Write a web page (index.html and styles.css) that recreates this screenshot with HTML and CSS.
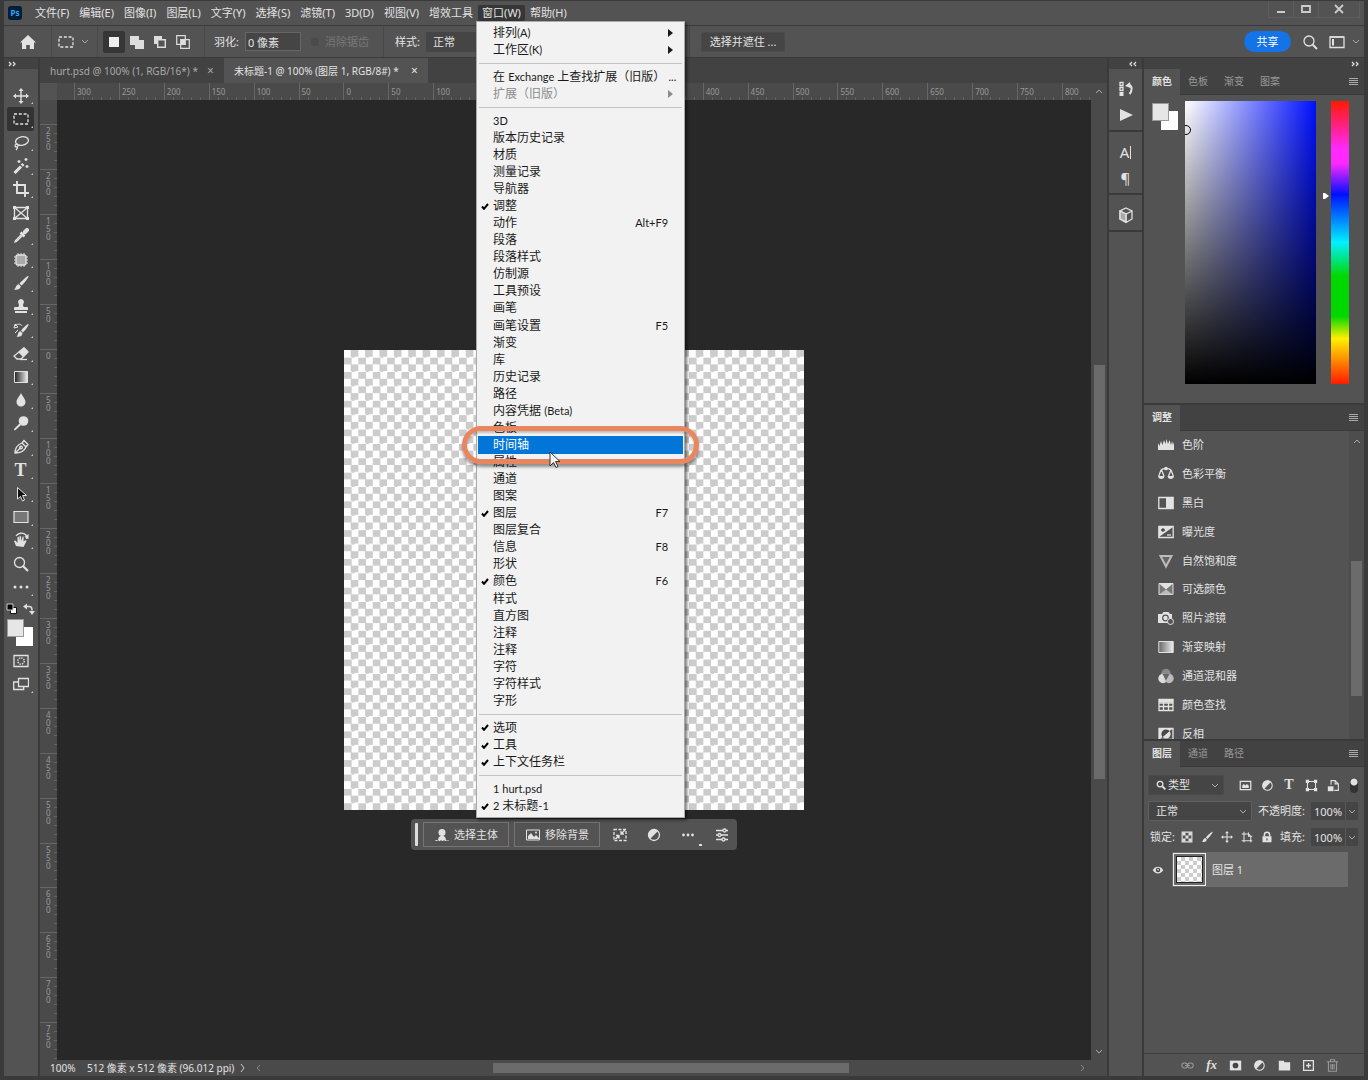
FILE: index.html
```html
<!DOCTYPE html>
<html lang="zh-CN">
<head>
<meta charset="utf-8">
<title>Photoshop</title>
<link rel="stylesheet" href="styles.css">
</head>
<body>
<div class="app">
  <header class="menubar">
    <span class="logo">Ps</span>
    <nav class="menus">
      <button class="menu-title">文件(F)</button>
      <button class="menu-title">编辑(E)</button>
      <button class="menu-title">图像(I)</button>
      <button class="menu-title">图层(L)</button>
      <button class="menu-title">文字(Y)</button>
      <button class="menu-title">选择(S)</button>
      <button class="menu-title">滤镜(T)</button>
      <button class="menu-title">3D(D)</button>
      <button class="menu-title">视图(V)</button>
      <button class="menu-title">增效工具</button>
      <div class="menu-host">
        <button class="menu-title open">窗口(W)</button>
        <ul class="dropdown">
          <li><button class="item"><span>排列<i>(A)</i></span><svg class="arrow" viewBox="0 0 5 8"><path d="M0 0l5 4-5 4z"/></svg></button></li>
          <li><button class="item"><span>工作区<i>(K)</i></span><svg class="arrow" viewBox="0 0 5 8"><path d="M0 0l5 4-5 4z"/></svg></button></li>
          <li class="rule"></li>
          <li><button class="item"><span>在 <i>Exchange</i> 上查找扩展（旧版） <i>...</i></span></button></li>
          <li><button class="item" disabled><span>扩展（旧版）</span><svg class="arrow" viewBox="0 0 5 8"><path d="M0 0l5 4-5 4z"/></svg></button></li>
          <li class="rule"></li>
          <li><button class="item"><span><i>3D</i></span></button></li>
          <li><button class="item"><span>版本历史记录</span></button></li>
          <li><button class="item"><span>材质</span></button></li>
          <li><button class="item"><span>测量记录</span></button></li>
          <li><button class="item"><span>导航器</span></button></li>
          <li><button class="item"><svg class="tick" viewBox="0 0 8 7"><path d="M1 3.500l2 2.300L7 1"/></svg><span>调整</span></button></li>
          <li><button class="item"><span>动作</span><kbd>Alt+F9</kbd></button></li>
          <li><button class="item"><span>段落</span></button></li>
          <li><button class="item"><span>段落样式</span></button></li>
          <li><button class="item"><span>仿制源</span></button></li>
          <li><button class="item"><span>工具预设</span></button></li>
          <li><button class="item"><span>画笔</span></button></li>
          <li><button class="item"><span>画笔设置</span><kbd>F5</kbd></button></li>
          <li><button class="item"><span>渐变</span></button></li>
          <li><button class="item"><span>库</span></button></li>
          <li><button class="item"><span>历史记录</span></button></li>
          <li><button class="item"><span>路径</span></button></li>
          <li><button class="item"><span>内容凭据 <i>(Beta)</i></span></button></li>
          <li><button class="item"><span>色板</span></button></li>
          <li class="current"><button class="item"><span>时间轴</span></button><span class="ring"></span>
            <svg class="pointer" viewBox="0 0 12 18"><path d="M1 1v14l3.500-3.500 2.500 5 2-1-2.500-5H11z"/></svg></li>
          <li><button class="item"><span>属性</span></button></li>
          <li><button class="item"><span>通道</span></button></li>
          <li><button class="item"><span>图案</span></button></li>
          <li><button class="item"><svg class="tick" viewBox="0 0 8 7"><path d="M1 3.500l2 2.300L7 1"/></svg><span>图层</span><kbd>F7</kbd></button></li>
          <li><button class="item"><span>图层复合</span></button></li>
          <li><button class="item"><span>信息</span><kbd>F8</kbd></button></li>
          <li><button class="item"><span>形状</span></button></li>
          <li><button class="item"><svg class="tick" viewBox="0 0 8 7"><path d="M1 3.500l2 2.300L7 1"/></svg><span>颜色</span><kbd>F6</kbd></button></li>
          <li><button class="item"><span>样式</span></button></li>
          <li><button class="item"><span>直方图</span></button></li>
          <li><button class="item"><span>注释</span></button></li>
          <li><button class="item"><span>注释</span></button></li>
          <li><button class="item"><span>字符</span></button></li>
          <li><button class="item"><span>字符样式</span></button></li>
          <li><button class="item"><span>字形</span></button></li>
          <li class="rule"></li>
          <li><button class="item"><svg class="tick" viewBox="0 0 8 7"><path d="M1 3.500l2 2.300L7 1"/></svg><span>选项</span></button></li>
          <li><button class="item"><svg class="tick" viewBox="0 0 8 7"><path d="M1 3.500l2 2.300L7 1"/></svg><span>工具</span></button></li>
          <li><button class="item"><svg class="tick" viewBox="0 0 8 7"><path d="M1 3.500l2 2.300L7 1"/></svg><span>上下文任务栏</span></button></li>
          <li class="rule"></li>
          <li><button class="item"><span><i>1 hurt.psd</i></span></button></li>
          <li><button class="item"><svg class="tick" viewBox="0 0 8 7"><path d="M1 3.500l2 2.300L7 1"/></svg><span><i>2 </i>未标题<i>-1</i></span></button></li>
        </ul>
      </div>
      <button class="menu-title">帮助(H)</button>
    </nav>
    <div class="window-buttons">
      <button aria-label="最小化"><svg viewBox="0 0 12 12"><path d="M2 8h8v2H2z" fill="currentColor"/></svg></button>
      <button aria-label="最大化"><svg viewBox="0 0 12 12"><path d="M2 3h8v6H2z" fill="none" stroke="currentColor" stroke-width="1.800"/></svg></button>
      <button aria-label="关闭" class="close"><svg viewBox="0 0 12 12"><path d="M2 2l8 8M10 2l-8 8" stroke="currentColor" stroke-width="1.800"/></svg></button>
    </div>
  </header>

  <section class="options">
    <div class="group home"><button aria-label="主页"><svg class="ic" viewBox="0 0 16 16"><path d="M8 1L0 8.500h2V15h4.200v-4h3.600v4H14V8.500h2z"/></svg></button></div>
    <div class="group preset">
      <svg class="ic line" viewBox="0 0 16 16"><path d="M1 3h14v10H1z" stroke-dasharray="3 1.800"/></svg>
      <svg class="chev" viewBox="0 0 8 5"><path d="M1 1l3 3 3-3"/></svg>
    </div>
    <div class="group modes">
      <button class="on" aria-label="新选区"><svg viewBox="0 0 14 14"><path d="M2 2h10v10H2z" fill="#eee"/></svg></button>
      <button aria-label="添加到选区"><svg viewBox="0 0 14 14"><path d="M0 1h9v4h5v9H5V10H0z" fill="#ddd"/></svg></button>
      <button aria-label="从选区减去"><svg viewBox="0 0 14 14"><path d="M1 1h8v3H4v5H1z" fill="#ddd"/><path d="M4.700 4.700h7.600v7.600H4.700z" fill="none" stroke="#ddd" stroke-width="1.400"/></svg></button>
      <button aria-label="与选区交叉"><svg viewBox="0 0 14 14"><path d="M.7.7h8.600v8.600H.7zM4.700 4.700h8.600v8.600H4.700z" fill="none" stroke="#ddd" stroke-width="1.200"/><path d="M5 5h4v4H5z" fill="#ddd"/></svg></button>
    </div>
    <div class="group feather">
      <label for="feather">羽化:</label><input id="feather" type="text" value="0 像素">
      <input id="aa" type="checkbox" disabled><label for="aa" class="off">消除锯齿</label>
    </div>
    <div class="group style">
      <label for="style">样式:</label>
      <span class="select"><select id="style"><option>正常</option></select></span>
    </div>
    <button class="mask">选择并遮住 ...</button>
    <div class="right-tools">
      <button class="share">共享</button>
      <button aria-label="搜索"><svg class="ic line" viewBox="0 0 16 16"><circle cx="7" cy="7" r="5"/><path d="M10.800 10.800L15 15" stroke-width="2"/></svg></button>
      <button aria-label="工作区"><svg class="ic line" viewBox="0 0 16 16"><path d="M1 3h14v10.500H1z"/><path d="M4 5v6.500" stroke-width="2"/><path d="M1 3h14"/></svg></button>
      <svg class="chev" viewBox="0 0 8 5"><path d="M1 1l3 3 3-3"/></svg>
    </div>
  </section>

  <main class="workspace">
    <aside class="column toolbox">
      <div class="collapse left"><svg viewBox="0 0 8 6"><path d="M1 1l2 2-2 2M5 1l2 2-2 2"/></svg></div>
      <div class="tools-panel">
        <div class="tools">
          <button class="tool" aria-label="移动"><svg class="ic line" viewBox="0 0 16 16"><path d="M8 2v12M2 8h12" stroke-width="1.400"/><path class="solid" d="M8 0l2.500 3h-5zM8 16l2.500-3h-5zM0 8l3-2.500v5zM16 8l-3-2.500v5z"/></svg></button>
          <button class="tool active" aria-label="矩形选框"><svg class="ic line" viewBox="0 0 16 16"><path d="M1 3h14v10H1z" stroke-dasharray="3 1.800"/></svg></button>
          <button class="tool" aria-label="套索"><svg class="ic line" viewBox="0 0 16 16"><ellipse cx="9" cy="6" rx="6.500" ry="4.300" transform="rotate(-12 9 6)"/><path d="M3.500 9c-2 1-2 3 0 3s2-3 0-3M4 12c1 1 0 2-1 3"/></svg></button>
          <button class="tool" aria-label="魔棒"><svg class="ic line" viewBox="0 0 16 16"><path d="M1.500 15L8 8.500" stroke-width="3"/><path d="M8.800 7.600l1.600-1.600" stroke-width="3"/><path d="M6 2v3M4.500 3.500h3M13 0v3M11.500 1.500h3M14 7v3M12.500 8.500h3"/></svg></button>
          <button class="tool" aria-label="裁剪"><svg class="ic line" viewBox="0 0 16 16"><path d="M4 0v12h12M0 4h12v12" stroke-width="1.900"/></svg></button>
          <button class="tool plain" aria-label="图框"><svg class="ic line" viewBox="0 0 16 16"><path d="M1.500 2.500h13v11h-13zM1.500 2.500l13 11M14.500 2.500l-13 11"/><path class="solid" d="M0 1h3v3H0zM13 1h3v3h-3zM0 12h3v3H0zM13 12h3v3h-3z"/></svg></button>
          <button class="tool" aria-label="吸管"><svg class="ic line" viewBox="0 0 16 16"><path d="M9 6l-6.500 6.500L2 14l1.500-.5L10 7"/><path d="M7.500 4.500l4 4M10 6l3.500-3.500" stroke-width="2.500"/><path d="M12 4l2-2" stroke-width="4" stroke-linecap="round"/></svg></button>
          <button class="tool" aria-label="修复"><svg class="ic line" viewBox="0 0 16 16"><rect x="3" y="3" width="10" height="10" rx="2" fill="#aaa"/><path d="M5 1v14M8 1v14M11 1v14M1 5h14M1 8h14M1 11h14" stroke-width="1" stroke-dasharray="2 10"/></svg></button>
          <button class="tool" aria-label="画笔"><svg class="ic" viewBox="0 0 16 16"><path d="M15.500 1c.8.800-4.500 7.500-7 9.500L6.500 8.500C8.500 6 14.700.200 15.500 1zM5.800 9.200l2 2C7.500 14 4 15.500 1 14.500c2-.8 1.500-4.800 4.800-5.300z"/></svg></button>
          <button class="tool" aria-label="图章"><svg class="ic" viewBox="0 0 16 16"><path d="M8 1a3 3 0 0 1 2.500 4.500c-.8 1.500-.5 3 .5 3.500h3a1 1 0 0 1 1 1v2H1v-2a1 1 0 0 1 1-1h3c1-.5 1.300-2 .5-3.500A3 3 0 0 1 8 1zM2 13h12v2H2z"/></svg></button>
          <button class="tool" aria-label="历史记录画笔"><svg class="ic" viewBox="0 0 16 16"><path d="M15.500 2c.8.800-3 6.500-5.500 8.500L8 8.500C10 6 14.700 1.200 15.500 2zM7.500 9.200l2 2c-.3 2.800-3 4.300-6 3.300 2-.8.700-4.800 4-5.300z"/><path d="M1 6l1-4 3 3zM2 4c3-3 6-2 7 0M2 11l3-3" fill="none" stroke="currentColor"/></svg></button>
          <button class="tool" aria-label="橡皮擦"><svg class="ic line" viewBox="0 0 16 16"><path d="M1 11l3 3h4l7-7-4-4z"/><path class="solid" d="M5 7l6-5 4.500 4.500L10 12z"/><path d="M7 14.500h7"/></svg></button>
          <button class="tool" aria-label="渐变"><svg class="ic" viewBox="0 0 16 16"><defs><linearGradient id="g1"><stop stop-color="#222"/><stop offset="1" stop-color="#eee"/></linearGradient></defs><path d="M1.500 2.500h13v11h-13z" fill="url(#g1)" stroke="currentColor"/></svg></button>
          <button class="tool" aria-label="模糊"><svg class="ic" viewBox="0 0 16 16"><path d="M8 1c2 4 4.500 6 4.500 9A4.500 4.500 0 0 1 3.500 10C3.500 7 6 5 8 1z"/></svg></button>
          <button class="tool" aria-label="减淡"><svg class="ic" viewBox="0 0 16 16"><circle cx="10.500" cy="6" r="4.800"/><path d="M6.500 8.500L8 10l-6 5.500L.8 14.300z"/></svg></button>
          <button class="tool" aria-label="钢笔"><svg class="ic line" viewBox="0 0 16 16"><path d="M2 14c0-5 2-8 7-10l4 4c-2 5-6 6-11 6zL8 8.500M9 4l2-2.500L15 5.500 13 8"/><circle cx="8" cy="8.500" r="1.300"/></svg></button>
          <button class="tool type" aria-label="文字">T</button>
          <button class="tool" aria-label="路径选择"><svg class="ic" viewBox="0 0 16 16"><path d="M4.500 1.500v11.500l3-2.500 2 4.500 2-1-2-4.500h4z" fill="#111" stroke="currentColor"/></svg></button>
          <button class="tool" aria-label="矩形"><svg class="ic" viewBox="0 0 16 16"><path d="M1 2.500h14v11H1z" fill="#777" stroke="currentColor" stroke-width="1.200"/></svg></button>
          <button class="tool" aria-label="旋转视图"><svg class="ic" viewBox="0 0 16 16"><path d="M3 14L1 9l1.500-.5L4.500 11V5l1.300-.2L6.500 9V4l1.300-.1L8.500 9l1-4.500 1.200.2L10.500 9.500l2-1.500 1 1-3 6z"/><path d="M3 4c2-3 7-4 10-1l1 4" fill="none" stroke="currentColor" stroke-width="1.300"/><path d="M15.500 2v5l-4-2z"/></svg></button>
          <button class="tool plain" aria-label="缩放"><svg class="ic line" viewBox="0 0 16 16"><circle cx="6.500" cy="6.500" r="5"/><path d="M10 10l5 5" stroke-width="2.200"/></svg></button>
          <button class="tool" aria-label="编辑工具栏"><svg class="ic" viewBox="0 0 16 16"><circle cx="2" cy="8" r="1.500"/><circle cx="8" cy="8" r="1.500"/><circle cx="14" cy="8" r="1.500"/></svg></button>
        </div>
        <div class="swap">
          <svg viewBox="0 0 12 12"><path d="M4.500 4.500h6v6h-6z" fill="#fff" stroke="#111"/><path d="M1 1h6v6H1z" fill="#000" stroke="#ccc"/></svg>
          <svg viewBox="0 0 12 12"><path d="M3 3.500h3.500c2 0 2.500 1 2.500 4" fill="none" stroke="#ddd" stroke-width="1.600"/><path d="M0 3.500L4 .5v6zM9 12L6 8h6z" fill="#ddd"/></svg>
        </div>
        <div class="swatches"><span class="fg"></span><span class="bg"></span></div>
        <div class="screen-tools">
          <button class="tool plain" aria-label="快速蒙版"><svg class="ic line" viewBox="0 0 16 16"><path d="M1 2.500h14v11H1z"/><circle cx="8" cy="8" r="3.200" stroke-dasharray="1.500 1"/></svg></button>
          <button class="tool" aria-label="屏幕模式"><svg class="ic line" viewBox="0 0 16 16"><path d="M5.500 2.500h10v8h-10z"/><path d="M5 6H.7v7.500h10V11"/></svg></button>
        </div>
      </div>
    </aside>

    <section class="document">
      <div class="tabs">
        <div class="doc-tab"><span>hurt.psd @ 100% (1, RGB/16*) *</span><button aria-label="关闭">×</button></div>
        <div class="doc-tab active"><span>未标题-1 @ 100% (图层 1, RGB/8#) *</span><button aria-label="关闭">×</button></div>
      </div>
      <div class="corner"></div>
      <div class="ruler-x"><div class="scale">
        <span>300</span><span>250</span><span>200</span><span>150</span><span>100</span><span>50</span><span>0</span><span>50</span><span>100</span><span>150</span><span>200</span><span>250</span><span>300</span><span>350</span><span>400</span><span>450</span><span>500</span><span>550</span><span>600</span><span>650</span><span>700</span><span>750</span><span>800</span>
      </div></div>
      <div class="ruler-y"><div class="scale">
        <span>250</span><span>200</span><span>150</span><span>100</span><span>50</span><span>0</span><span>50</span><span>100</span><span>150</span><span>200</span><span>250</span><span>300</span><span>350</span><span>400</span><span>450</span><span>500</span><span>550</span><span>600</span><span>650</span><span>700</span><span>750</span>
      </div></div>
      <div class="canvas">
        <div class="artboard checker">
          <div class="taskbar">
            <span class="grip"></span>
            <button class="task"><svg class="ic" viewBox="0 0 16 16"><circle cx="8" cy="5.500" r="3.500"/><path d="M4 13c0-2.500 1.500-3.500 2.500-4h3c1 .5 2.500 1.500 2.500 4z"/><path d="M1.500 13.500h13" stroke="currentColor" stroke-dasharray="2 1"/></svg>选择主体</button>
            <button class="task"><svg class="ic" viewBox="0 0 16 16"><path d="M1.500 3h13v10h-13z" fill="none" stroke="currentColor"/><path d="M3 12V9l3-3 3 4 2-2 3 3v1z"/><circle cx="11" cy="5.500" r="1"/></svg>移除背景</button>
            <button class="mini" aria-label="变换"><svg class="ic line" viewBox="0 0 16 16"><path d="M2 2.500h12v11H2z" stroke-dasharray="3 1.500"/><path d="M13 3L9.500 6.500M9 4v3h3M3.500 12L7 8.500M7 11.500V8.500H4"/></svg></button>
            <button class="mini" aria-label="调整图层"><svg class="ic line" viewBox="0 0 16 16"><circle cx="8" cy="8" r="5.500"/><path class="solid" d="M12 4a5.500 5.500 0 0 0-8 8z"/></svg></button>
            <button class="mini more" aria-label="更多"><svg class="ic" viewBox="0 0 16 16"><circle cx="3.500" cy="8" r="1.400"/><circle cx="8" cy="8" r="1.400"/><circle cx="12.500" cy="8" r="1.400"/></svg></button>
            <button class="mini" aria-label="属性"><svg class="ic line" viewBox="0 0 16 16"><path d="M2 3.500h7M12 3.500h2M2 8h2M7 8h7M2 12.500h6M11 12.500h3"/><circle cx="10.500" cy="3.500" r="1.500"/><circle cx="5.500" cy="8" r="1.500"/><circle cx="9.500" cy="12.500" r="1.500"/></svg></button>
          </div>
        </div>
      </div>
      <div class="scroll-y">
        <svg class="chev" viewBox="0 0 8 5"><path d="M1 4l3-3 3 3"/></svg>
        <div class="track"><span class="thumb"></span></div>
        <svg class="chev" viewBox="0 0 8 5"><path d="M1 1l3 3 3-3"/></svg>
      </div>
      <footer class="status">
        <span class="zoom">100%</span>
        <span class="size">512 像素 x 512 像素 (96.012 ppi)</span>
        <svg class="side" viewBox="0 0 5 8"><path d="M1 0l3 4-3 4"/></svg>
        <svg class="side dim" viewBox="0 0 5 8"><path d="M4 1L1 4l3 3"/></svg>
        <div class="track"><span class="thumb"></span></div>
        <svg class="side dim" viewBox="0 0 5 8"><path d="M1 1l3 3-3 3"/></svg>
      </footer>
    </section>

    <aside class="column dock">
      <div class="collapse"><svg viewBox="0 0 8 6"><path d="M3 1L1 3l2 2M7 1L5 3l2 2"/></svg></div>
      <div class="dock-group"><button aria-label="历史记录"><svg class="ic line" viewBox="0 0 16 16"><path d="M2 1.500h3v3H2zM2 6.500h3v3H2z"/><path class="solid" d="M1.500 11h4v4h-4zM7 5l5-4 .5 6z"/><path d="M10.500 3.500c4 1 4 6 1 9.500" stroke-width="2"/></svg></button><button aria-label="动作"><svg class="ic" viewBox="0 0 16 16"><path d="M2 2l13 6-13 6z"/></svg></button></div>
      <div class="dock-group"><button aria-label="字符" class="glyph">A<span class="caret"></span></button><button aria-label="段落" class="glyph">¶</button></div>
      <div class="dock-group"><button aria-label="3D"><svg class="ic line" viewBox="0 0 16 16"><path d="M8 1l6 3v8l-6 3.500L2 12V4zM2 4l6 3 6-3M8 7v8"/><path d="M2 4l6 3v8l-6-3z" fill="#aaa"/></svg></button></div>
      <div class="dock-rest"></div>
    </aside>

    <aside class="column panels">
      <div class="collapse right"><svg viewBox="0 0 8 6"><path d="M1 1l2 2-2 2M5 1l2 2-2 2"/></svg></div>
      <section class="panel color">
        <div class="panel-tabs"><button class="on">颜色</button><button>色板</button><button>渐变</button><button>图案</button><svg class="burger" viewBox="0 0 9 8"><path d="M0 .5h9M0 2.500h9M0 4.500h9M0 6.500h9"/></svg></div>
        <div class="color-body">
          <div class="swatches"><span class="fg"></span><span class="bg"></span></div>
          <div class="field"><span class="picker"></span></div>
          <div class="hue-box"><svg class="hue-mark" viewBox="0 0 7 8"><path d="M1 1h2l4 3-4 3H1z"/></svg><input class="hue" type="range" min="0" max="360" value="240" aria-label="色相"></div>
        </div>
      </section>
      <section class="panel adjust">
        <div class="panel-tabs"><button class="on">调整</button><svg class="burger" viewBox="0 0 9 8"><path d="M0 .5h9M0 2.500h9M0 4.500h9M0 6.500h9"/></svg></div>
        <div class="adjust-body">
          <ul>
            <li><svg class="ic" viewBox="0 0 16 16"><path d="M0 13V6l1.500 3L3 4l1.500 4L6 3l1.500 4L8.500 2 10 7l1.500-4L13 8l1-4 1 4 1-3v8z"/></svg>色阶</li>
            <li><svg class="ic line" viewBox="0 0 16 16"><path d="M3 4c2-2 8-2 10 0M3 4L.8 10M3.500 4L6 10M13 4l-2.500 6M13 4l2.300 6"/><path class="solid" d="M0 10h6.500c0 4-6.500 4-6.500 0zM9.500 10H16c0 4-6.500 4-6.500 0z"/><circle cx="8" cy="2.500" r="1.200"/></svg>色彩平衡</li>
            <li><svg class="ic line" viewBox="0 0 16 16"><path d="M.8 2.500h14.400v11H.8z"/><path class="solid" d="M8 2.500h7v11H8z"/></svg>黑白</li>
            <li><svg class="ic line" viewBox="0 0 16 16"><path d="M.8 2.500h14.400v11H.8z"/><path class="solid" d="M1 13V3h14z"/><path d="M3 6h4M5 4v4" stroke="#444"/><path d="M9 11h4"/></svg>曝光度</li>
            <li><svg class="ic" viewBox="0 0 16 16"><path d="M2.500 3h11L8 13.500z" fill="#666" stroke="#bbb" stroke-width="2"/></svg>自然饱和度</li>
            <li><svg class="ic" viewBox="0 0 16 16"><path d="M1 2.500h14v11H1z" fill="#777" stroke="currentColor"/><path d="M1 2.500h14l-7 6z"/><path d="M1 13.500h14l-7-5z" fill="#bbb"/></svg>可选颜色</li>
            <li><svg class="ic" viewBox="0 0 16 16"><path d="M0 4h4l1.500-2h5L12 4h2v9H0z"/><circle cx="7.500" cy="8" r="2.800" fill="none" stroke="#555" stroke-width="1.200"/><circle cx="12.500" cy="11.500" r="3" fill="#555" stroke="currentColor"/></svg>照片滤镜</li>
            <li><svg class="ic" viewBox="0 0 16 16"><path d="M.8 2.500h14.400v11H.8z" fill="url(#g2)" stroke="currentColor"/><defs><linearGradient id="g2"><stop stop-color="#666"/><stop offset="1" stop-color="#eee"/></linearGradient></defs></svg>渐变映射</li>
            <li><svg class="ic" viewBox="0 0 16 16"><circle cx="8" cy="5.500" r="4.700" fill="#888"/><circle cx="5" cy="10.500" r="4.700" fill="#ddd"/><circle cx="11" cy="10.500" r="4.700" fill="#bbb"/><path d="M4.500 6h7L8 12.500z" fill="#666"/></svg>通道混和器</li>
            <li><svg class="ic line" viewBox="0 0 16 16"><path class="solid" d="M.8 2.500h14.400v3H.8z"/><path d="M1 2.500h14v11H1zM1 6h14M1 9.500h14M5.500 3v10M10.500 3v10"/></svg>颜色查找</li>
            <li><svg class="ic" viewBox="0 0 16 16"><path d="M1 2.500h14v11H1z" fill="none" stroke="currentColor" stroke-width="1.300"/><path d="M1 14V2.500h14L11.500 5A5 5 0 0 0 4.500 11z"/><path d="M11.500 5a4.300 4.300 0 0 1-7 6z"/><path d="M4.500 11a4.500 4.500 0 0 1 7-6z" fill="#484848"/></svg>反相</li>
          </ul>
          <div class="adjust-scroll"><svg class="chev" viewBox="0 0 8 5"><path d="M1 4l3-3 3 3"/></svg><span class="thumb"></span></div>
        </div>
      </section>
      <section class="panel layers">
        <div class="panel-tabs"><button class="on">图层</button><button>通道</button><button>路径</button><svg class="burger" viewBox="0 0 9 8"><path d="M0 .5h9M0 2.500h9M0 4.500h9M0 6.500h9"/></svg></div>
        <div class="row filter">
          <span class="select kind"><svg class="ic line glass" viewBox="0 0 16 16"><circle cx="6.500" cy="6.500" r="4.500" stroke-width="2"/><path d="M10 10l5 5" stroke-width="3"/></svg><select aria-label="类型"><option>类型</option></select><svg class="chev" viewBox="0 0 8 5"><path d="M1 1l3 3 3-3"/></svg></span>
          <div class="filter-icons">
            <button aria-label="像素"><svg class="ic line" viewBox="0 0 16 16"><path d="M1.500 3h13v10h-13z" stroke-width="1.500"/><path class="solid" d="M4 11V8l2-2 2 2 1.500-2L12 8v3z"/></svg></button>
            <button aria-label="调整"><svg class="ic line" viewBox="0 0 16 16"><circle cx="8" cy="8" r="5.800"/><path class="solid" d="M12.500 3.500a6 6 0 0 0-9 9z"/></svg></button>
            <button aria-label="文字" class="serif">T</button>
            <button aria-label="形状"><svg class="ic line" viewBox="0 0 16 16"><path d="M3 3h10v10H3z"/><path class="solid" d="M1 1h4v4H1zM11 1h4v4h-4zM1 11h4v4H1zM11 11h4v4h-4z"/></svg></button>
            <button aria-label="智能对象"><svg class="ic line" viewBox="0 0 16 16"><path d="M5 7V2h5l4 4v8H9M10 2v4h4"/><path class="solid" d="M1 9h7v6H1z"/></svg></button>
          </div>
          <input class="switch" type="checkbox" checked aria-label="打开图层过滤">
        </div>
        <div class="row">
          <span class="select blend"><select aria-label="混合模式"><option>正常</option></select><svg class="chev" viewBox="0 0 8 5"><path d="M1 1l3 3 3-3"/></svg></span>
          <label for="opacity">不透明度:</label>
          <span class="number"><input id="opacity" type="text" value="100%"><svg class="chev" viewBox="0 0 8 5"><path d="M1 1l3 3 3-3"/></svg></span>
        </div>
        <div class="row lock">
          <span>锁定:</span>
          <div class="lock-icons">
            <button aria-label="透明像素"><svg class="ic" viewBox="0 0 16 16"><path d="M1.500 1.500h13v13h-13z" fill="none" stroke="currentColor" stroke-width="1.500"/><path d="M2 2h4v4H2zM10 2h4v4h-4zM6 6h4v4H6zM2 10h4v4H2zM10 10h4v4h-4z"/></svg></button>
            <button aria-label="图像像素"><svg class="ic" viewBox="0 0 16 16"><path d="M15.500 1c.8.800-4.500 7.500-7 9.500L6.500 8.500C8.500 6 14.700.200 15.500 1zM5.800 9.200l2 2C7.500 14 4 15.500 1 14.500c2-.8 1.500-4.800 4.800-5.300z"/></svg></button>
            <button aria-label="位置"><svg class="ic line" viewBox="0 0 16 16"><path d="M8 2v12M2 8h12" stroke-width="1.400"/><path class="solid" d="M8 0l2.500 3h-5zM8 16l2.500-3h-5zM0 8l3-2.500v5zM16 8l-3-2.500v5z"/></svg></button>
            <button aria-label="画板"><svg class="ic line" viewBox="0 0 16 16"><path d="M4 1v14M1 4h9l3 3v8M1 13h14M10 2v5h5" stroke-width="1.400"/></svg></button>
            <button aria-label="全部"><svg class="ic" viewBox="0 0 16 16"><path d="M2 7h12v8H2z"/><path d="M4.500 7V5a3.500 3.500 0 0 1 7 0v2" fill="none" stroke="currentColor" stroke-width="2"/><path d="M7.300 9.500h1.400v3H7.300z" fill="#444"/></svg></button>
          </div>
          <label for="fill">填充:</label>
          <span class="number"><input id="fill" type="text" value="100%"><svg class="chev" viewBox="0 0 8 5"><path d="M1 1l3 3 3-3"/></svg></span>
        </div>
        <div class="layer">
          <button class="eye" aria-label="可见性"><svg class="ic" viewBox="0 0 16 16"><path d="M1 8c3-6 11-6 14 0-3 6-11 6-14 0z"/><circle cx="8" cy="8" r="3" fill="#444"/><circle cx="8" cy="7.500" r="1.200"/></svg></button>
          <div class="layer-main"><span class="thumb-frame"><span class="checker small"></span></span><span>图层 1</span></div>
        </div>
        <div class="layer-foot">
          <button aria-label="链接" class="dim"><svg class="ic line" viewBox="0 0 16 16"><rect x="1" y="5" width="7" height="6" rx="3"/><rect x="8" y="5" width="7" height="6" rx="3"/><path d="M5 8h6"/></svg></button>
          <button aria-label="图层样式" class="fx">fx</button>
          <button aria-label="蒙版"><svg class="ic" viewBox="0 0 16 16"><path d="M1 2h14v12H1z"/><circle cx="8" cy="8" r="3.500" fill="#444"/></svg></button>
          <button aria-label="新建调整图层"><svg class="ic line" viewBox="0 0 16 16"><circle cx="8" cy="8" r="5.800"/><path class="solid" d="M12.500 3.500a6 6 0 0 0-9 9z"/></svg></button>
          <button aria-label="新建组"><svg class="ic" viewBox="0 0 16 16"><path d="M1 2h6l1 2h7v10H1z"/></svg></button>
          <button aria-label="新建图层"><svg class="ic line" viewBox="0 0 16 16"><path d="M2 2h12v12H2zM8 5v6M5 8h6" stroke-width="1.600"/></svg></button>
          <button aria-label="删除" class="dim"><svg class="ic line" viewBox="0 0 16 16"><path d="M1 3.500h14M5.500 3V1h5v2M3 4v11h10V4M6 6v7M8 6v7M10 6v7"/></svg></button>
        </div>
      </section>
    </aside>
  </main>
</div>
</body>
</html>
```
FILE: styles.css
```css
:root {
  --chrome: #535353;
  --bar: #424242;
  --seam: #3a3a3a;
  --field: #454545;
  --text: #e2e2e2;
}

* { box-sizing: border-box; }

body {
  margin: 0;
  background: var(--seam);
  color: var(--text);
  font: 11px/16px "Noto Sans", "Noto Sans CJK SC", sans-serif;
}

button, input, select {
  margin: 0;
  padding: 0;
  border: 0;
  background: none;
  color: inherit;
  font: inherit;
  appearance: none;
}

button { display: flex; align-items: center; justify-content: center; }
ul { margin: 0; padding: 0; list-style: none; }
svg { display: block; flex: none; }

.ic { width: 16px; height: 16px; fill: currentColor; }
.ic.line { fill: none; stroke: currentColor; stroke-width: 1.3; }
.ic .solid { fill: currentColor; stroke: none; }
.chev { width: 8px; height: 5px; fill: none; stroke: #aaa; }

.app {
  display: flex;
  flex-direction: column;
  height: 100vh;
  padding: 1px 4px 4px;
}

/* Menu bar */
.menubar {
  display: flex;
  height: 25px;
  background: var(--chrome);
  border-bottom: 1px solid var(--seam);
}
.logo {
  width: 14px;
  height: 14px;
  margin: 5px 8px 0 4px;
  border-radius: 3px;
  background: #001e36;
  color: #31a8ff;
  font-size: 8px;
  font-weight: 700;
  line-height: 13px;
  text-align: center;
}
.menus { display: flex; align-items: flex-start; padding-top: 4px; }
.menu-title { height: 16px; padding: 0 5px; border-radius: 2px; white-space: nowrap; }
.menu-title.open { padding: 0 4px; background: #363636; }
.menu-host { position: relative; }
.window-buttons { display: flex; margin-left: auto; height: 17px; }
.window-buttons button { width: 25px; border: solid #5e5e5e; border-width: 0 0 1px 1px; color: #ccc; }
.window-buttons .close { width: 42px; margin-right: 4px; border-right-width: 1px; }
.window-buttons svg { width: 12px; height: 12px; }

/* Window menu */
.dropdown {
  position: absolute;
  z-index: 10;
  top: 16px;
  left: -2px;
  display: flex;
  flex-direction: column;
  width: 209px;
  height: 797px;
  padding: 2px 0;
  border: 1px solid #aaa;
  background: #f2f2f2;
  box-shadow: 2px 2px 3px #0008;
  color: #1a1a1a;
  font-size: 12px;
}
.dropdown li { position: relative; flex: 1; display: flex; min-height: 0; }
.dropdown .rule { flex: none; height: 10px; padding: 0 2px; align-items: center; }
.dropdown .rule::before { content: ""; flex: 1; height: 1px; background: #c4c4c4; }
.item {
  display: grid;
  grid-template-columns: 16px 1fr auto;
  flex: 1;
  align-items: center;
  padding-right: 16px;
  line-height: 16px;
  text-align: left;
  white-space: nowrap;
}
.item > span { grid-column: 2; }
.item i, .item kbd { font: 11px/16px Lato, sans-serif; }
.item:disabled { color: #8c8c8c; }
.item .tick { width: 8px; height: 7px; margin-left: 4px; fill: none; stroke: #000; stroke-width: 2; }
.item .arrow { width: 5px; height: 8px; margin-right: -9px; fill: currentColor; }
.current { z-index: 1; margin: 0 1px; background: #0275d8; color: #fff; }
.current .item { grid-template-columns: 15px 1fr auto; }
.ring {
  position: absolute;
  inset: -10px -16px;
  border: 5px solid #e8865f;
  border-radius: 20px;
  box-shadow: 0 3px 3px #0006, inset 0 2px 2px #0003;
}
.pointer { position: absolute; left: 71px; top: 15px; width: 12px; height: 18px; fill: #f4f4f4; stroke: #333; }

/* Options bar */
.options {
  display: flex;
  align-items: center;
  height: 32px;
  background: var(--chrome);
  border-bottom: 1px solid var(--seam);
}
.group { display: flex; align-items: center; height: 31px; border-right: 1px solid #484848; }
.home { width: 48px; justify-content: center; }
.preset { width: 46px; padding-left: 6px; gap: 7px; }
.modes { width: 107px; padding-left: 5px; gap: 1px; }
.modes button { width: 22px; height: 22px; border-radius: 2px; }
.modes .on { background: #363636; }
.modes svg { width: 14px; height: 14px; }
.feather { width: 179px; padding-left: 9px; gap: 6px; }
.feather input[type="text"] { width: 56px; height: 19px; padding-left: 2px; border: 1px solid #666; background: var(--field); }
.feather input[type="checkbox"] { width: 8px; height: 8px; margin-left: 4px; border-radius: 2px; background: #4b4b4b; }
.off { color: #777; }
.style { width: 306px; padding-left: 11px; gap: 6px; }
.style .select { flex: 1; margin-right: 12px; }
.select { display: grid; align-items: center; height: 20px; border-radius: 2px; background: var(--field); }
.select > * { grid-area: 1 / 1; }
.select select { width: 100%; height: 18px; padding-left: 7px; }
.select .chev { justify-self: end; margin-right: 4px; pointer-events: none; }
.mask { width: 84px; height: 20px; margin-left: 11px; border: 1px solid #4b4b4b; border-radius: 2px; background: var(--field); }
.right-tools { display: flex; align-items: center; gap: 11px; margin-left: auto; padding-right: 4px; }
.right-tools .chev { margin-left: -4px; }
.share { width: 47px; height: 21px; border-radius: 11px; background: #1473e6; color: #fff; }

/* Workspace columns */
.workspace {
  display: grid;
  grid-template-columns: 34px 1fr 33px 220px;
  flex: 1;
  min-height: 0;
  column-gap: 2px;
}
.column { display: flex; flex-direction: column; min-height: 0; }
.collapse { display: flex; flex: none; align-items: center; justify-content: flex-end; height: 11px; padding: 0 5px; background: var(--bar); }
.collapse.left { justify-content: flex-start; padding: 0 4px; }
.collapse svg { width: 8px; height: 6px; fill: none; stroke: #ddd; stroke-width: 1.3; }

.tools-panel { flex: 1; padding-top: 15px; background: var(--chrome); }
.tools { display: flex; flex-direction: column; height: 515px; }
.tool { position: relative; flex: 1; width: 27px; margin: 0 3px; border-radius: 2px; }
.tool::after {
  content: "";
  position: absolute;
  right: 1px;
  bottom: 3px;
  border: 1px solid;
  border-color: transparent #ccc #ccc transparent;
}
.tool.plain::after { display: none; }
.tool.active { background: #333; }
.tool.type { font: 700 18px/20px "Liberation Serif", serif; }
.swap { display: flex; gap: 5px; padding: 4px 2px; }
.swap svg { width: 12px; height: 12px; }
.swatches { display: grid; grid-template: 8px 10px 9px / 9px 8px 9px; }
.swatches .fg { z-index: 1; grid-area: 1 / 1 / 3 / 3; background: #e6e6e6; border: 1px solid #999; }
.swatches .bg { grid-area: 2 / 2 / 4 / 4; background: #fff; }
.tools-panel .swatches { margin-left: 3px; }
.screen-tools { display: flex; flex-direction: column; height: 47px; margin-top: 3px; }

/* Document window */
.document {
  display: grid;
  grid-template: 25px 17px minmax(0, 1fr) 16px / 17px minmax(0, 1fr) 16px;
  min-width: 0;
  min-height: 0;
  background: #4a4a4a;
}
.tabs { display: flex; grid-column: 1 / 4; background: var(--bar); }
.doc-tab { display: flex; align-items: center; gap: 9px; padding: 0 10px; color: #a8a8a8; font-size: 10px; }
.doc-tab.active { justify-content: space-between; min-width: 204px; background: var(--chrome); color: var(--text); }
.doc-tab button { width: 7px; height: 16px; font-size: 12px; }
.corner { background: #535353; }
.ruler-x { grid-column: 2 / 4; overflow: hidden; }
.scale { display: flex; color: #999; }
.ruler-x .scale { width: 1033px; height: 17px; margin-left: 17px; font-size: 8px; line-height: 17px; }
.ruler-x span {
  flex: 1;
  padding-left: 2px;
  border-left: 1px solid #666;
  background: repeating-linear-gradient(90deg, transparent 0 8px, #636363 8px 9px) bottom / 100% 3px no-repeat;
}
.ruler-y { overflow: hidden; }
.ruler-y .scale { flex-direction: column; height: 943px; margin-top: 24px; font-size: 8px; line-height: 8px; }
.ruler-y span {
  flex: 1;
  padding: 2px 6px 0 6px;
  border-top: 1px solid #666;
  background: repeating-linear-gradient(transparent 0 8px, #636363 8px 9px) right / 3px 100% no-repeat;
  word-break: break-all;
}
.canvas { display: flex; align-items: center; justify-content: center; min-height: 0; background: #282828; }
.checker { background: repeating-conic-gradient(#ccc 0 25%, #fff 0 50%) 0 0 / calc(100% / 32) calc(100% / 32); }
.artboard { position: relative; width: 460px; height: 460px; }
.taskbar {
  position: absolute;
  top: 469px;
  left: 67px;
  display: flex;
  align-items: center;
  gap: 5px;
  width: 326px;
  height: 31px;
  padding-left: 4px;
  border-radius: 4px;
  background: var(--chrome);
}
.grip { width: 3px; height: 23px; border-radius: 1px; background: #ddd; }
.task { width: 86px; height: 25px; gap: 4px; border: 1px solid #757575; }
.mini { width: 29px; height: 25px; }
.more { position: relative; }
.more::after { content: ""; position: absolute; right: 0; bottom: 1px; width: 3px; height: 2px; background: #ddd; }
.thumb { display: block; background: #6b6b6b; }
.scroll-y { display: flex; flex-direction: column; align-items: center; padding: 6px 0; margin-top: -17px; z-index: 1; grid-column: 3; grid-row: 3; background: #4a4a4a; }
.scroll-y .track { display: flex; flex-direction: column; flex: 1; width: 11px; }
.scroll-y .track::before { content: ""; flex: 271; }
.scroll-y .track::after { content: ""; flex: 270; }
.scroll-y .thumb { flex: 413; }
.status { display: flex; grid-column: 1 / 4; align-items: center; padding: 0 22px 1px 10px; font-size: 10px; }
.status .zoom { width: 37px; }
.status .size { width: 153px; white-space: nowrap; }
.side { width: 5px; height: 8px; fill: none; stroke: #ccc; }
.side.dim { margin-left: 11px; stroke: #888; }
.status .track { display: flex; flex: 1; height: 10px; margin-left: 6px; }
.status .track + .dim { margin-left: 0; }
.status .track::before { content: ""; flex: 227; }
.status .track::after { content: ""; flex: 232; }
.status .thumb { flex: 358; }

/* Icon dock */
.dock .collapse { justify-content: flex-end; }
.dock-group { display: flex; flex-direction: column; align-items: center; gap: 4px; padding: 9px 0 4px; margin-bottom: 2px; background: var(--chrome); }
.dock-group button { width: 24px; height: 22px; }
.glyph { font-size: 15px; }
.caret { width: 1px; height: 13px; margin-left: 1px; background: currentColor; }
.dock-rest { flex: 1; background: var(--chrome); }

/* Panels */
.panel { background: var(--chrome); margin-bottom: 2px; }
.panel-tabs { display: flex; align-items: center; height: 26px; padding-right: 6px; border-bottom: 1px solid var(--seam); background: var(--bar); font-size: 10px; }
.panel-tabs button { height: 26px; padding: 0 8px 2px; color: #999; }
.panel-tabs .on { margin-bottom: -1px; background: var(--chrome); color: var(--text); font-weight: 600; }
.burger { width: 9px; height: 8px; margin-left: auto; stroke: #aaa; }
.color { flex: none; }
.color-body {
  display: grid;
  grid-template: minmax(0, 1fr) / 33px 1fr 33px;
  height: 308px;
  padding: 6px 15px 19px 8px;
}
.color-body .swatches { align-self: start; margin-top: 2px; }
.field {
  position: relative;
  overflow: hidden;
  background: linear-gradient(transparent, #000), linear-gradient(90deg, #fff, #0010ff);
}
.picker { position: absolute; left: -4px; top: 24px; width: 10px; height: 10px; border: 1px solid #000; border-radius: 50%; }
.hue-box { position: relative; display: flex; justify-content: flex-end; min-height: 0; }
.hue-mark { position: absolute; left: 6px; top: 32%; width: 7px; height: 8px; fill: #fff; }
.hue {
  width: 18px;
  height: auto;
  min-height: 0;
  writing-mode: vertical-lr;
  background: linear-gradient(#ff1a00, #ff28ff 17%, #ff28ff 22%, #0010ff 33%, #00f0ff 50%, #00d800 62%, #00d800 76%, #fff000 84%, #ff1a00);
}
.hue::-webkit-slider-thumb { appearance: none; width: 18px; height: 1px; background: transparent; }
.adjust { flex: none; }
.adjust-body { display: flex; height: 308px; overflow: hidden; }
.adjust ul { display: flex; flex: 1; flex-direction: column; height: 317px; }
.adjust li { display: flex; flex: 1; align-items: center; gap: 8px; padding-left: 14px; line-height: 12px; white-space: nowrap; }
.adjust-scroll { display: flex; flex-direction: column; align-items: center; width: 15px; padding-top: 8px; background: #4d4d4d; }
.adjust-scroll .thumb { flex: none; width: 11px; height: 135px; margin-top: 117px; }
.layers { display: flex; flex: 1; flex-direction: column; min-height: 0; margin: 0; }
.row { display: flex; flex: none; align-items: center; height: 26px; padding: 0 6px 0 4px; }
.row label { white-space: nowrap; margin-left: auto; margin-right: 6px; }
.filter { margin-top: 5px; }
.kind { width: 76px; border: 1px solid #4a4a4a; }
.kind .glass { width: 10px; height: 10px; margin-left: 7px; }
.kind select { padding-left: 19px; }
.filter-icons { display: flex; gap: 8px; margin-left: 14px; }
.filter-icons button, .lock-icons button { width: 14px; height: 16px; }
.filter-icons .ic { width: 13px; height: 13px; }
.serif { font: 700 14px/16px "Liberation Serif", serif; }
.switch { width: 8px; height: 15px; margin-left: auto; border-radius: 4px; background: radial-gradient(circle at 4px 4px, #e0e0e0 0 3px, #333 4px); }
.blend { width: 104px; border: 1px solid #5f5f5f; }
.number { display: flex; align-items: center; width: 47px; height: 18px; background: var(--field); }
.number input { width: 35px; height: 18px; padding-left: 3px; border-right: 1px solid #5a5a5a; }
.number .chev { margin-left: 2px; }
.lock { padding-left: 6px; }
.lock-icons { display: flex; gap: 6px; margin-left: 5px; }
.lock .ic { width: 12px; height: 12px; }
.layer { display: flex; height: 35px; margin: 2px 16px 0 0; }
.eye { width: 28px; }
.eye .ic { width: 12px; height: 12px; }
.layer-main { display: flex; flex: 1; align-items: center; gap: 6px; padding-left: 1px; background: #6b6b6b; }
.thumb-frame { display: grid; width: 33px; height: 33px; padding: 2px; border: 1px solid #eee; }
.checker.small { background-size: 8px 8px; border: 1px solid #222; }
.layer-foot { display: flex; justify-content: space-between; height: 23px; margin-top: auto; padding: 0 23px 0 35px; border-top: 1px solid #3f3f3f; }
.layer-foot button { width: 17px; }
.layer-foot .ic { width: 13px; height: 13px; }
.fx { font: italic 700 13px/16px "Liberation Serif", serif; }
.dim { color: #999; }
```
